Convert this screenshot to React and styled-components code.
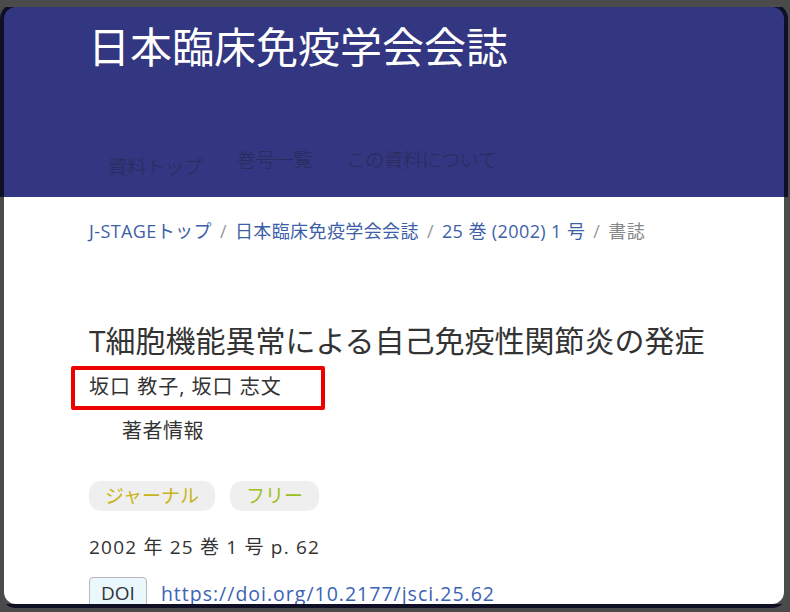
import React from "react";
import styled, { createGlobalStyle } from "styled-components";

const GlobalStyle = createGlobalStyle`
  html, body {
    margin: 0;
    padding: 0;
    background: #4a4a4a;
    overflow: hidden;
  }
  body {
    font-family: "Open Sans", "Noto Sans CJK JP", sans-serif;
  }
`;

const Window = styled.div`
  box-sizing: border-box;
  margin: 3px 2px 0 0;
  height: 605px;
  border: 4px solid rgba(0, 0, 0, 0.7);
  border-radius: 16px;
  overflow: hidden;
  background: linear-gradient(#333680 0, #333680 190px, #fff 190px);
  background-clip: border-box;
  display: flex;
  flex-direction: column;
`;

const Header = styled.header`
  flex-shrink: 0;
  height: 190px;
  display: flex;
  flex-direction: column;
  justify-content: space-between;
  padding: 8px 0 0 84px;
  box-sizing: border-box;
`;

const JournalTitle = styled.h1`
  margin: 0;
  color: #fff;
  font-family: "Noto Sans CJK JP", sans-serif;
  font-size: 42px;
  font-weight: 400;
  line-height: 60px;
`;

const Nav = styled.nav`
  display: flex;
  align-items: flex-start;
  gap: 34px;
  height: 52px;
  padding-left: 20px;
`;

const NavItem = styled.a`
  color: #2a2c5c;
  font-family: "Noto Sans CJK JP", sans-serif;
  font-size: 19.5px;
  font-weight: 300;
  line-height: 28px;
  letter-spacing: -0.6px;
  margin-top: ${(p) => (p.$active ? "7px" : "0")};
`;

const Main = styled.main`
  flex-shrink: 0;
  padding: 22px 0 0 85px;
  display: flex;
  flex-direction: column;
  align-items: flex-start;
`;

const Breadcrumb = styled.div`
  font-size: 18px;
  line-height: 24px;
  letter-spacing: 0.4px;
  color: #3d5fa8;
  display: flex;
  gap: 8px;
  margin-bottom: 78px;
`;

const Sep = styled.span`
  color: #999;
`;

const Current = styled.span`
  color: #888;
`;

const ArticleTitle = styled.h2`
  margin: 0;
  font-size: 30px;
  font-weight: 400;
  line-height: 40px;
  color: #333;
`;

const Authors = styled.div`
  box-sizing: border-box;
  margin: 5px 0 0 -18px;
  width: 254px;
  height: 44px;
  border: 4px solid #ee0000;
  border-radius: 2px;
  padding: 0 0 0 14px;
  font-size: 20px;
  letter-spacing: 1px;
  line-height: 34px;
  color: #333;
`;

const AuthorInfo = styled.div`
  margin: 6px 0 0 33px;
  font-size: 20px;
  line-height: 30px;
  color: #333;
  letter-spacing: 0.5px;
`;

const Tags = styled.div`
  display: flex;
  gap: 15px;
  margin-top: 35px;
`;

const Tag = styled.span`
  background: #efefef;
  border-radius: 12px;
  padding: 0 16px;
  height: 30px;
  line-height: 30px;
  font-size: 19px;
  color: ${(p) => p.$color};
`;

const Citation = styled.div`
  margin-top: 21px;
  font-size: 19px;
  letter-spacing: 1.2px;
  line-height: 30px;
  color: #333;
`;

const DoiRow = styled.div`
  display: flex;
  align-items: center;
  gap: 14px;
  margin-top: 15px;
`;

const DoiBadge = styled.span`
  box-sizing: border-box;
  background: #eaf8fd;
  border: 1px solid #b8b8b8;
  border-radius: 4px;
  padding: 0 11px;
  height: 32px;
  line-height: 30px;
  font-size: 19px;
  color: #333;
`;

const DoiLink = styled.a`
  color: #3a63b5;
  font-size: 19.5px;
  letter-spacing: 1px;
  text-decoration: none;
`;

export default function App() {
  return (
    <>
      <GlobalStyle />
      <Window>
        <Header>
          <JournalTitle>日本臨床免疫学会会誌</JournalTitle>
          <Nav>
            <NavItem $active>資料トップ</NavItem>
            <NavItem>巻号一覧</NavItem>
            <NavItem>この資料について</NavItem>
          </Nav>
        </Header>
        <Main>
          <Breadcrumb>
            <span>J-STAGEトップ</span>
            <Sep>/</Sep>
            <span>日本臨床免疫学会会誌</span>
            <Sep>/</Sep>
            <span>25 巻 (2002) 1 号</span>
            <Sep>/</Sep>
            <Current>書誌</Current>
          </Breadcrumb>
          <ArticleTitle>T細胞機能異常による自己免疫性関節炎の発症</ArticleTitle>
          <Authors>坂口 教子, 坂口 志文</Authors>
          <AuthorInfo>著者情報</AuthorInfo>
          <Tags>
            <Tag $color="#c8b418">ジャーナル</Tag>
            <Tag $color="#9cbf1e">フリー</Tag>
          </Tags>
          <Citation>2002 年 25 巻 1 号 p. 62</Citation>
          <DoiRow>
            <DoiBadge>DOI</DoiBadge>
            <DoiLink>https://doi.org/10.2177/jsci.25.62</DoiLink>
          </DoiRow>
        </Main>
      </Window>
    </>
  );
}
